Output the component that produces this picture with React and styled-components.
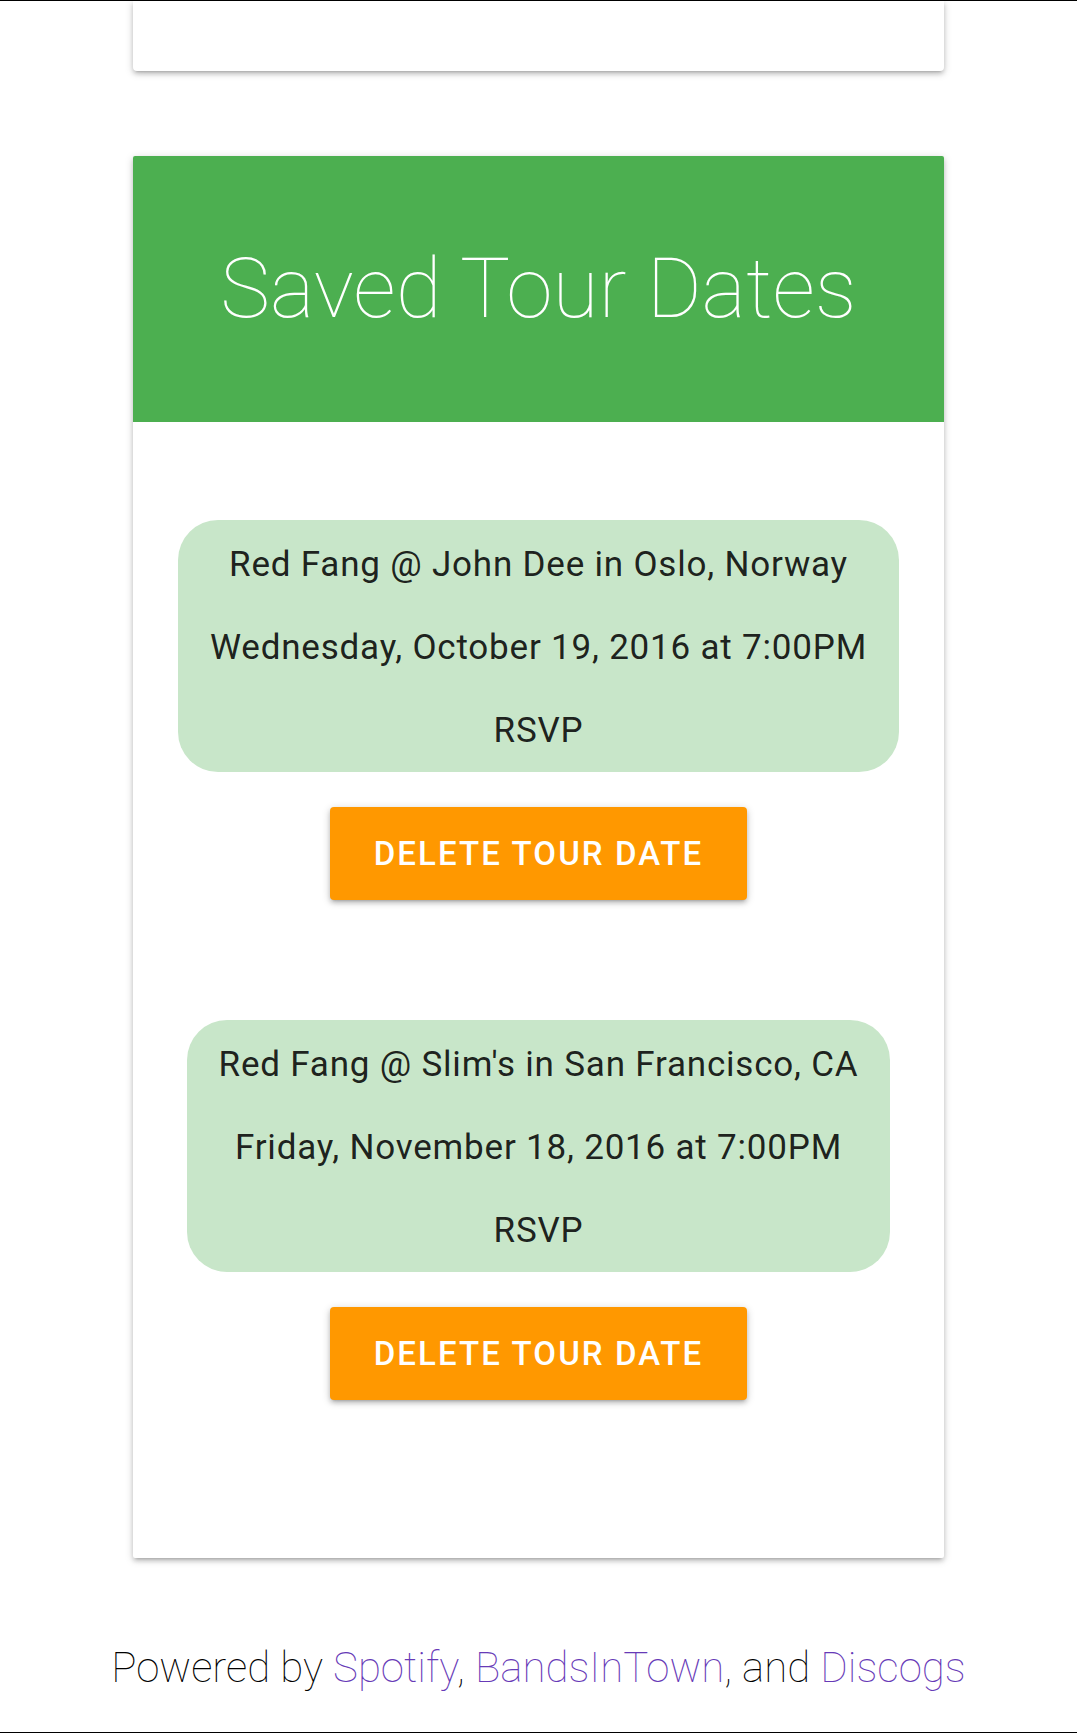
import React from 'react';
import styled, { createGlobalStyle } from 'styled-components';

const GlobalStyle = createGlobalStyle`
    html, body {
        margin: 0;
        padding: 0;
        background-color: #fff;
    }

    body {
        font-family: Roboto, "Liberation Sans", sans-serif;
        color: rgba(0, 0, 0, 0.87);
    }
`;

const tourDates = [
    {
        id: 1,
        title: 'Red Fang @ John Dee in Oslo, Norway',
        when: 'Wednesday, October 19, 2016 at 7:00PM'
    },
    {
        id: 2,
        title: "Red Fang @ Slim's in San Francisco, CA",
        when: 'Friday, November 18, 2016 at 7:00PM'
    }
];

class App extends React.Component {
    render() {
        return (
            <React.Fragment>
                <GlobalStyle />
                <PageWrapper>
                    <TopCard />
                    <SavedCard>
                        <SavedHeader>
                            <SavedTitle>Saved Tour Dates</SavedTitle>
                        </SavedHeader>
                        <SavedBody>
                            {tourDates.map(tour => (
                                <TourEntry key={tour.id}>
                                    <TourBubble>
                                        <TourLine>{tour.title}</TourLine>
                                        <TourLine>{tour.when}</TourLine>
                                        <TourLine>RSVP</TourLine>
                                    </TourBubble>
                                    <DeleteButton>Delete Tour Date</DeleteButton>
                                </TourEntry>
                            ))}
                        </SavedBody>
                    </SavedCard>
                    <Footer>
                        Powered by <FooterLink>Spotify</FooterLink>, <FooterLink>BandsInTown</FooterLink>, and <FooterLink>Discogs</FooterLink>
                    </Footer>
                </PageWrapper>
            </React.Fragment>
        );
    }
}

const PageWrapper = styled.div`
    border-top: 1px solid #000;
    border-bottom: 2px solid #000;
    display: flex;
    flex-direction: column;
    align-items: center;
`;

const cardShadow = `
    box-shadow: 0 3px 4px 0 rgba(0,0,0,0.14), 0 4px 2px -3px rgba(0,0,0,0.12), 0 2px 8px 0 rgba(0,0,0,0.18);
`;

const TopCard = styled.div`
    width: 811px;
    height: 70px;
    background-color: #fff;
    border-radius: 0 0 4px 4px;
    ${cardShadow}
`;

const SavedCard = styled.div`
    width: 811px;
    margin-top: 85px;
    background-color: #fff;
    border-radius: 2px;
    overflow: hidden;
    ${cardShadow}
`;

const SavedHeader = styled.div`
    height: 266px;
    background-color: #4caf50;
    display: flex;
    align-items: center;
    justify-content: center;
`;

const SavedTitle = styled.h1`
    margin: 0;
    font-size: 84px;
    font-weight: 100;
    line-height: 1;
    color: #fff;
`;

const SavedBody = styled.div`
    padding: 98px 0 158px;
    display: flex;
    flex-direction: column;
    align-items: center;
    gap: 120px;
`;

const TourEntry = styled.div`
    display: flex;
    flex-direction: column;
    align-items: center;
    gap: 35px;
`;

const TourBubble = styled.div`
    background-color: #c8e6c9;
    border-radius: 40px;
    padding: 3px 32px 0;
    text-align: center;
`;

const TourLine = styled.p`
    margin: 0;
    font-size: 35px;
    line-height: 83px;
    font-weight: 400;
    letter-spacing: 0.8px;
    color: rgba(0, 0, 0, 0.87);
    white-space: nowrap;
`;

const DeleteButton = styled.button`
    height: 93px;
    padding: 0 44px;
    border: none;
    border-radius: 4px;
    background-color: #ff9800;
    color: #fff;
    font-family: Roboto, "Liberation Sans", sans-serif;
    font-size: 33px;
    font-weight: 500;
    line-height: 93px;
    letter-spacing: 2.1px;
    text-transform: uppercase;
    cursor: pointer;
    box-shadow: 0 3px 4px 0 rgba(0,0,0,0.14), 0 4px 2px -3px rgba(0,0,0,0.12), 0 2px 8px 0 rgba(0,0,0,0.2);
`;

const Footer = styled.div`
    padding: 85px 0 39px;
    font-size: 42px;
    line-height: 50px;
    font-weight: 100;
    color: #000;
    text-align: center;
`;

const FooterLink = styled.a`
    color: #673ab7;
    text-decoration: none;
    cursor: pointer;
`;

export default App;
